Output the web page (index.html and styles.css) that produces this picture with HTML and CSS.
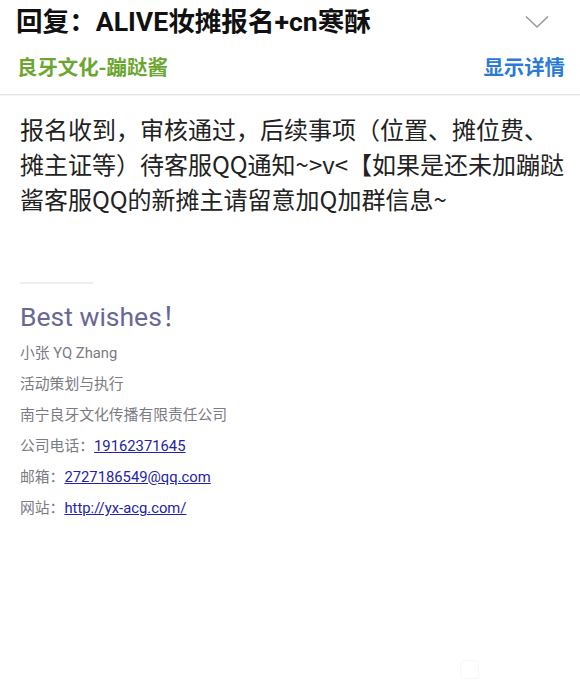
FILE: index.html
```html
<!DOCTYPE html>
<html lang="zh-CN">
<head>
<meta charset="utf-8">
<title>回复：ALIVE妆摊报名+cn寒酥</title>
<link rel="stylesheet" href="styles.css">
</head>
<body>
<header class="mail-head">
  <div class="title-row">
    <h1 class="subject">回复：ALIVE妆摊报名+cn寒酥</h1>
    <svg class="chevron" width="24" height="14" viewBox="0 0 24 14"><path d="M1 1.5 L12 12 L23 1.5" fill="none" stroke="#9a9a9a" stroke-width="1.6"/></svg>
  </div>
  <div class="sender-row">
    <span class="sender">良牙文化-蹦跶酱</span>
    <span class="details">显示详情</span>
  </div>
</header>
<main class="mail-body">
  <p class="message">报名收到，审核通过，后续事项（位置、摊位费、摊主证等）待客服QQ通知~&gt;v&lt;【如果是还未加蹦跶酱客服QQ的新摊主请留意加Q加群信息~</p>
  <div class="sig-rule"></div>
  <div class="signature">
    <div class="wishes">Best wishes！</div>
    <div class="sig-line">小张 YQ Zhang</div>
    <div class="sig-line">活动策划与执行</div>
    <div class="sig-line">南宁良牙文化传播有限责任公司</div>
    <div class="sig-line">公司电话：<a href="#">19162371645</a></div>
    <div class="sig-line">邮箱：<a href="#">2727186549@qq.com</a></div>
    <div class="sig-line">网站：<a href="#">http://yx-acg.com/</a></div>
  </div>
</main>
<div class="ghost-icon"></div>
</body>
</html>
```
FILE: styles.css
```css
html, body {
  margin: 0;
  padding: 0;
  background: #fff;
}
body {
  width: 580px;
  height: 685px;
  overflow: hidden;
  position: relative;
  font-family: Roboto, "Noto Sans CJK SC", sans-serif;
  color: #222;
}
.mail-head {
  padding: 4px 15px 12px 16px;
  border-bottom: 1px solid #e4e4e4;
  box-shadow: 0 1px 1px rgba(0,0,0,0.04);
}
.title-row {
  display: flex;
  align-items: center;
  justify-content: space-between;
  height: 36px;
}
.subject {
  margin: 0;
  font-size: 26.6px;
  font-weight: 700;
  line-height: 36px;
  color: #111;
  white-space: nowrap;
}
.chevron {
  margin-right: 16px;
  margin-top: -1px;
}
.sender-row {
  display: flex;
  justify-content: space-between;
  align-items: center;
  margin-top: 10px;
  height: 32px;
}
.sender {
  font-size: 20.4px;
  font-weight: 700;
  color: #6ba631;
  padding-left: 1px;
}
.details {
  font-size: 20.4px;
  font-weight: 700;
  color: #2a7ad6;
}
.mail-body {
  padding: 16px 15px 0 20px;
}
.message {
  margin: 0;
  font-family: "Noto Sans CJK SC", Roboto, sans-serif;
  font-size: 24px;
  line-height: 35px;
  color: #222;
}
.sig-rule {
  width: 73px;
  height: 2px;
  background: #eeeeee;
  margin-top: 66px;
}
.signature {
  margin-top: 15px;
}
.wishes {
  font-size: 26.5px;
  line-height: 36px;
  color: #686894;
  margin-bottom: 3px;
}
.sig-line {
  font-size: 14.8px;
  line-height: 31px;
  color: #7b7b84;
}
.sig-line a {
  color: #2323a8;
  text-decoration: underline;
}
.ghost-icon {
  position: absolute;
  left: 460px;
  top: 660px;
  width: 17px;
  height: 17px;
  border: 1px solid #f7f7f7;
  border-radius: 4px;
}
```
